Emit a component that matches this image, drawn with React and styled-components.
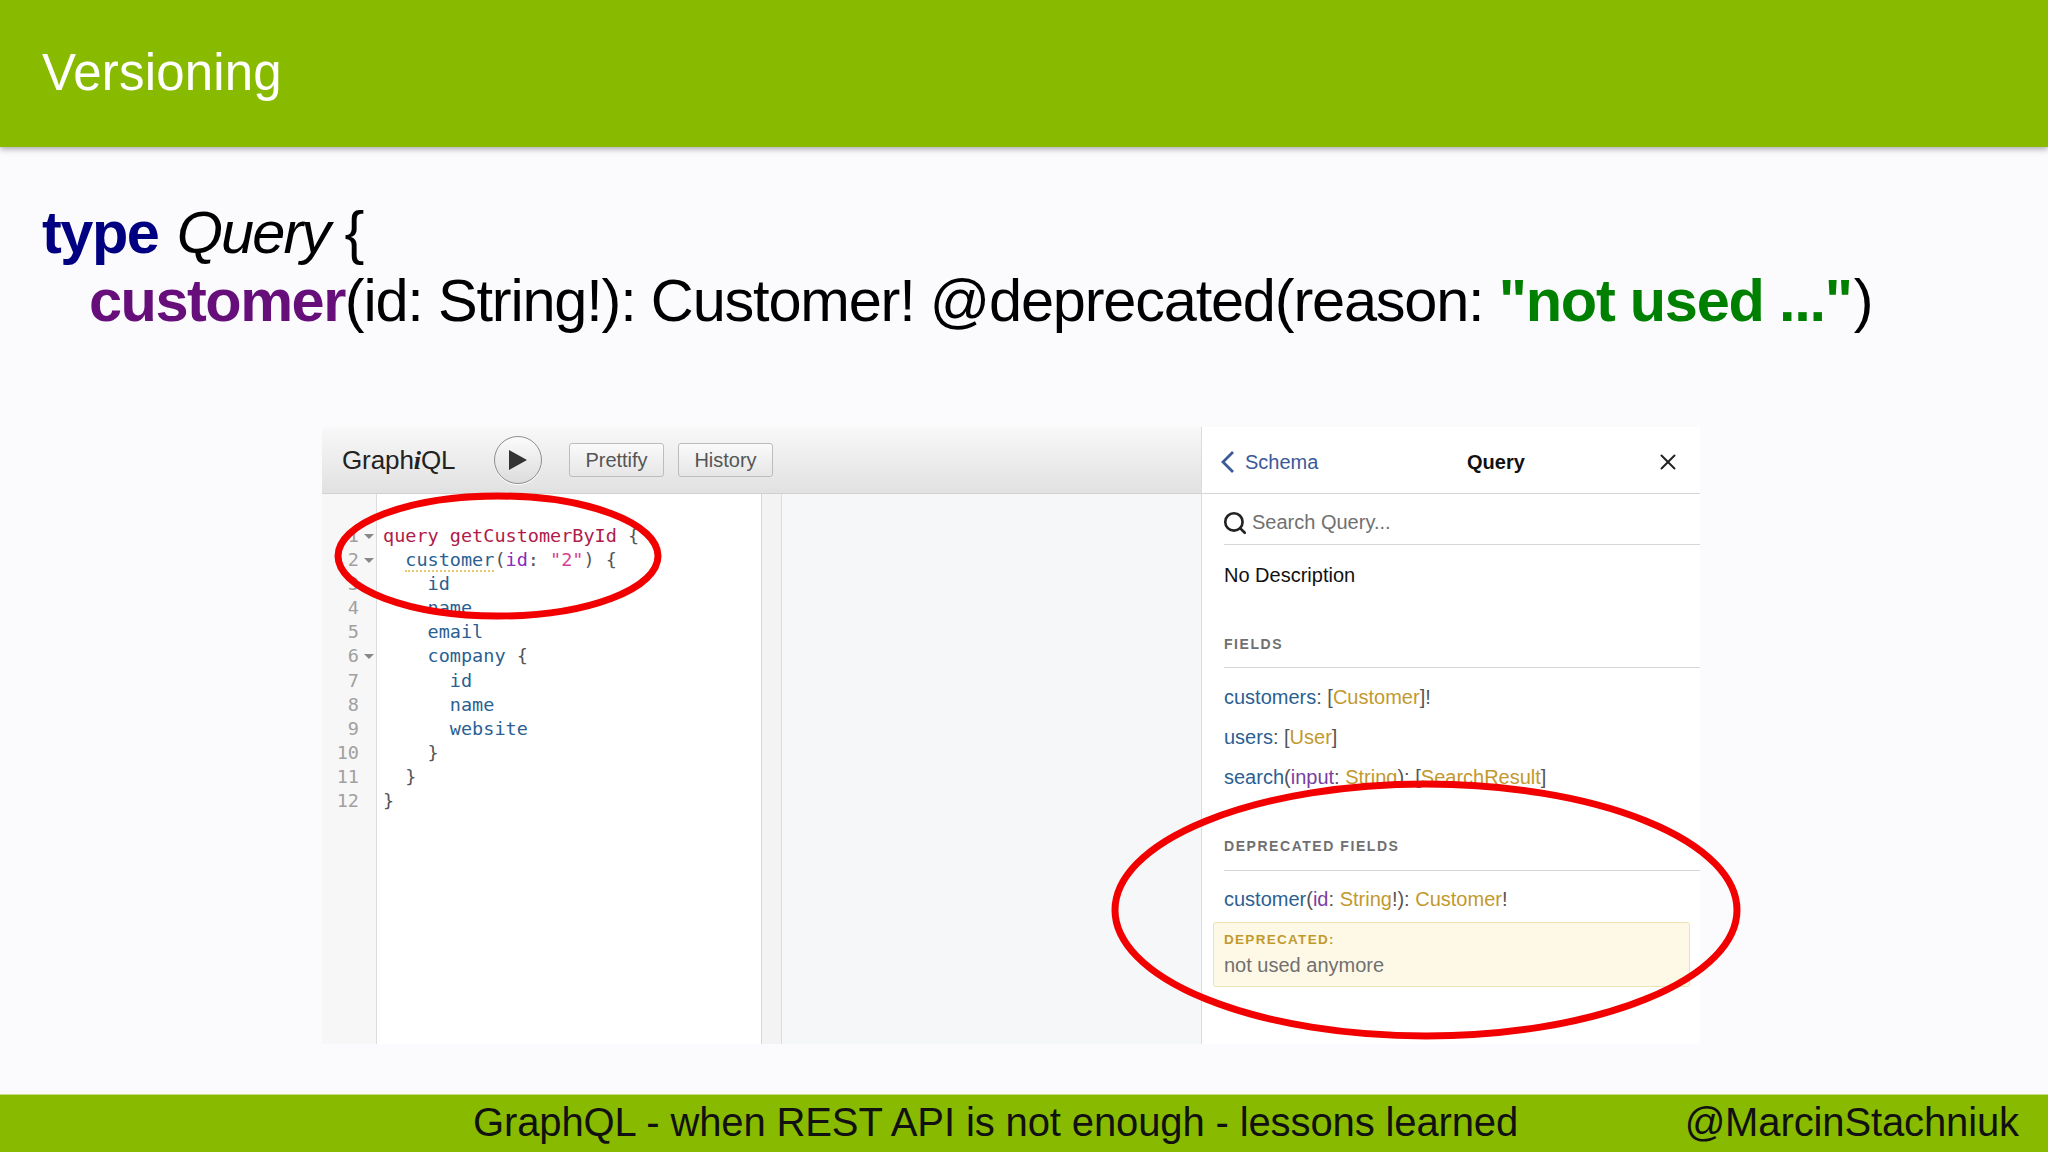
import React from "react";
import styled, { createGlobalStyle } from "styled-components";
import { X, Search } from "lucide-react";

const Global = createGlobalStyle`
  html, body { margin: 0; padding: 0; background: #fbfafd; }
  #root { width: 2048px; height: 1152px; overflow: hidden; }
`;
const Slide = styled.div`
  width: 2048px; height: 1152px; display: flex; flex-direction: column;
  background: #fbfafd; font-family: "Liberation Sans", Arial, sans-serif; color: #000;
`;
const Header = styled.header`
  height: 147px; flex: none; background: #88bb00; display: flex; align-items: center;
  padding: 0 0 2px 42px; box-sizing: border-box; box-shadow: 0 2px 6px rgba(70,60,80,.45); position: relative;
`;
const Title = styled.h1`
  margin: 0; color: #fff; font: 400 51px/1 "Liberation Sans", sans-serif; letter-spacing: 0.15px;
`;
const Content = styled.main`
  flex: 1; display: flex; flex-direction: column; min-height: 0;
`;
const Schema = styled.pre`
  margin: 52px 0 0 42px; height: 136px; font: 400 59.5px/68px "Liberation Sans", sans-serif; letter-spacing: -1.2px;
`;
const CodeLine = styled.div`padding-left: ${p => p.$indent || 0}px;`;
const Kw = styled.b`color: ${p => p.$c}; font-weight: 700; letter-spacing: ${p => p.$ls}px;`;
const Em = styled.i`letter-spacing: -1.9px; margin-left: 3px;`;
const Tail = styled.span`margin-left: 2px;`;

const Shot = styled.section`
  position: relative; width: 1378px; height: 617px; margin: 92px 0 0 322px; display: flex;
`;
const Left = styled.div`width: 879px; flex: none; display: flex; flex-direction: column;`;
const Toolbar = styled.div`
  height: 67px; flex: none; display: flex; align-items: center; padding: 0 0 0 20px;
  background: linear-gradient(#f8f8f8, #e1e1e1); border-bottom: 1px solid #d0d0d0; box-sizing: border-box;
`;
const Logo = styled.span`font: 400 26px "Liberation Sans", sans-serif; color: #222; width: 152px; letter-spacing: -0.1px;`;
const ItalicI = styled.i`font-family: "Liberation Serif", serif; font-weight: 700;`;
const Play = styled.button`
  width: 48px; height: 48px; border-radius: 50%; padding: 0; margin-right: 27px;
  border: 1px solid #8e8e8e; background: linear-gradient(#fbfbfb, #dcdcdc);
  display: flex; align-items: center; justify-content: center; box-shadow: 0 1px 1px #fff;
`;
const Btn = styled.button`
  height: 34px; width: ${p => p.$w}px; margin-right: 14px; padding: 0; border: 1px solid #bdbdbd; border-radius: 3px;
  background: linear-gradient(#fafafa, #e6e6e6); color: #555; font: 400 20px "Liberation Sans", sans-serif;
`;
const EditorRow = styled.div`flex: 1; display: flex; min-height: 0;`;
const Gutter = styled.div`
  width: 54px; flex: none; background: #f7f7f7; border-right: 1px solid #dcdcdc; padding-top: 30px;
  font: 18.5px/24.1px "DejaVu Sans Mono", monospace; color: #a0a0a0;
`;
const Num = styled.div`
  display: flex; height: 24.1px; width: 37px; justify-content: flex-end; position: relative;
`;
const Fold = styled.span`
  position: absolute; left: 42px; top: 10px; width: 0; height: 0;
  border-left: 5px solid transparent; border-right: 5px solid transparent; border-top: 5px solid #888;
`;
const Editor = styled.pre`
  width: 385px; flex: none; margin: 0; box-sizing: border-box; background: #fff; padding: 30px 0 0 6px;
  border-right: 1px solid #d6d6d6; font: 18.5px/24.1px "DejaVu Sans Mono", monospace; color: #555;
`;
const T = styled.span`color: ${p => p.$c};`;
const Warn = styled.span`border-bottom: 2px dotted #e8c86a;`;
const Scroll = styled.div`width: 19px; flex: none; background: #f3f3f3; border-right: 1px solid #dcdcdc;`;
const Result = styled.div`flex: 1; background: #f6f7f8;`;
const Docs = styled.aside`
  width: 499px; flex: none; background: #fff; border-left: 1px solid #dcdcdc; box-sizing: border-box;
  display: flex; flex-direction: column; font: 20px/24px "Liberation Sans", sans-serif;
`;
const DocsHead = styled.div`
  height: 67px; flex: none; display: flex; align-items: center; box-sizing: border-box;
  padding: 4px 19px 0 18px; border-bottom: 1px solid #d6d6d6;
`;
const Back = styled.span`display: flex; align-items: center; gap: 10px; color: #3b5998; width: 247px;`;
const DocsTitle = styled.b`color: #111; font-weight: 700;`;
const Close = styled.span`margin-left: auto; display: flex;`;
const SearchRow = styled.div`
  height: 51px; margin-left: 22px; display: flex; align-items: center; gap: 4px; border-bottom: 1px solid #d6d6d6; box-sizing: border-box; color: #707070; padding-top: 5px;
`;
const SearchIcon = styled(Search)`margin-left: -2px; margin-top: 2px;`;
const Desc = styled.div`margin: 18px 0 0 22px; height: 24px; color: #111;`;
const SectionTitle = styled.div`
  margin: ${p => p.$top}px 0 0 22px; height: ${p => p.$h}px; padding-top: ${p => p.$pad}px; box-sizing: border-box; border-bottom: 1px solid #d6d6d6;
  font: 700 14px/16px "Liberation Sans", sans-serif; letter-spacing: 1.55px; color: #707070;
`;
const Field = styled.div`margin: ${p => p.$top}px 0 0 22px; height: 24px; color: #555; white-space: nowrap;`;
const Name = styled.span`color: #2b5f92;`;
const Arg = styled.span`color: #7a3ea1;`;
const Type = styled.span`color: #c2992e;`;
const Notice = styled.div`
  margin: 11px 10px 0 11px; height: 65px; box-sizing: border-box; padding: 9px 0 0 10px;
  background: #fef9e6; border: 1px solid #ece2b4; border-radius: 3px;
`;
const NoticeLabel = styled.div`font: 700 13.5px/16px "Liberation Sans", sans-serif; letter-spacing: 1.3px; color: #c2992e;`;
const NoticeText = styled.div`margin-top: 5px; color: #707070;`;
const Circle = styled.svg`position: absolute; left: 0; top: 0; pointer-events: none; overflow: visible;`;

const Footer = styled.footer`
  height: 58px; flex: none; background: #88bb00; display: flex; align-items: center; justify-content: space-between;
  padding: 0 29px 4px 473px; border-top: 1px solid #c6dc88; box-sizing: border-box;
  font: 400 40px/1 "Liberation Sans", sans-serif; color: #111; letter-spacing: -0.12px;
`;

const nums = [1,2,3,4,5,6,7,8,9,10,11,12];
const folds = [1,2,6];
const F = "#2b5f92";

export default function App() {
  return (
    <Slide>
      <Global />
      <Header><Title>Versioning</Title></Header>
      <Content>
        <Schema>
          <CodeLine><Kw $c="#000080" $ls={-1.5}>type</Kw> <Em>Query</Em> {"{"}</CodeLine>
          <CodeLine $indent={47}><Kw $c="#660e7a" $ls={-1.5}>customer</Kw>(id: String!): Customer! @deprecated(reason: <Kw $c="#008000" $ls={-1.25}>"not used ..."</Kw><Tail>)</Tail></CodeLine>
        </Schema>
        <Shot>
          <Left>
            <Toolbar>
              <Logo>Graph<ItalicI>i</ItalicI>QL</Logo>
              <Play aria-label="Run">
                <svg width="20" height="22" viewBox="0 0 20 22"><path d="M1 1l18 10L1 21z" fill="#333" /></svg>
              </Play>
              <Btn $w={95}>Prettify</Btn>
              <Btn $w={95}>History</Btn>
            </Toolbar>
            <EditorRow>
              <Gutter>
                {nums.map(n => <Num key={n}>{n}{folds.includes(n) && <Fold />}</Num>)}
              </Gutter>
              <Editor>
<T $c="#b11a4a">query getCustomerById</T> {"{\n"}
{"  "}<Warn><T $c={F}>customer</T></Warn>(<T $c="#8b2bb9">id</T>: <T $c="#d64292">"2"</T>) {"{\n"}
{"    "}<T $c={F}>id</T>{"\n"}
{"    "}<T $c={F}>name</T>{"\n"}
{"    "}<T $c={F}>email</T>{"\n"}
{"    "}<T $c={F}>company</T> {"{\n"}
{"      "}<T $c={F}>id</T>{"\n"}
{"      "}<T $c={F}>name</T>{"\n"}
{"      "}<T $c={F}>website</T>{"\n"}
{"    }\n"}
{"  }\n"}
{"}"}
              </Editor>
              <Scroll />
              <Result />
            </EditorRow>
          </Left>
          <Docs>
            <DocsHead>
              <Back><svg width="15" height="24" viewBox="0 0 15 24" fill="none" stroke="#3b5998" strokeWidth="2.8"><path d="M13 2L3 12l10 10" /></svg>Schema</Back>
              <DocsTitle>Query</DocsTitle>
              <Close><X size={26} color="#222" strokeWidth={1.8} /></Close>
            </DocsHead>
            <SearchRow><SearchIcon size={26} color="#222" strokeWidth={2.4} />Search Query...</SearchRow>
            <Desc>No Description</Desc>
            <SectionTitle $top={48} $h={33} $pad={1}>FIELDS</SectionTitle>
            <Field $top={17}><Name>customers</Name>: [<Type>Customer</Type>]!</Field>
            <Field $top={16}><Name>users</Name>: [<Type>User</Type>]</Field>
            <Field $top={16}><Name>search</Name>(<Arg>input</Arg>: <Type>String</Type>): [<Type>SearchResult</Type>]</Field>
            <SectionTitle $top={49} $h={33} $pad={0}>DEPRECATED FIELDS</SectionTitle>
            <Field $top={16}><Name>customer</Name>(<Arg>id</Arg>: <Type>String</Type>!): <Type>Customer</Type>!</Field>
            <Notice>
              <NoticeLabel>DEPRECATED:</NoticeLabel>
              <NoticeText>not used anymore</NoticeText>
            </Notice>
          </Docs>
          <Circle width="1378" height="617" viewBox="0 0 1378 617" fill="none" stroke="#f20000">
            <ellipse cx="176" cy="129" rx="160" ry="60" strokeWidth="7" />
            <ellipse cx="1104" cy="483" rx="311" ry="126" strokeWidth="7" />
          </Circle>
        </Shot>
      </Content>
      <Footer>
        <span>GraphQL - when REST API is not enough - lessons learned</span>
        <span>@MarcinStachniuk</span>
      </Footer>
    </Slide>
  );
}
